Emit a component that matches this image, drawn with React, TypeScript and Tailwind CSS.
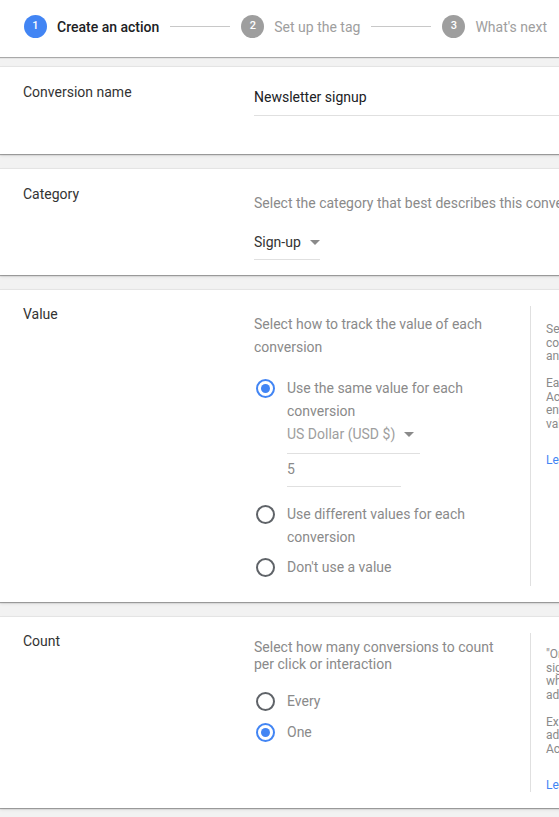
import React from "react"

type StepProps = {
  n: number
  label: string
  active?: boolean
}

const Step = ({ n, label, active }: StepProps) => (
  <div className="flex items-center gap-[10px] shrink-0">
    <div
      className={`flex h-[23px] w-[23px] items-center justify-center rounded-full text-[11px] font-medium text-white ${
        active ? "bg-[#4285f4]" : "bg-[#9e9e9e]"
      }`}
    >
      {n}
    </div>
    <span
      className={`text-[14px] leading-5 whitespace-nowrap ${
        active ? "font-medium text-[#202124]" : "text-[#9e9e9e]"
      }`}
    >
      {label}
    </span>
  </div>
)

const Connector = () => <div className="ml-[11px] mr-[11px] h-px w-[60px] shrink-0 bg-[#c8c8c8]" />

const Caret = () => (
  <svg width="10" height="5" viewBox="0 0 10 5" className="ml-[9px] shrink-0">
    <path d="M0 0h10L5 5z" fill="#8a8a8a" />
  </svg>
)

const Radio = ({ checked }: { checked?: boolean }) => (
  <div
    className={`mt-[2px] flex h-[19px] w-[19px] shrink-0 items-center justify-center rounded-full border-2 ${
      checked ? "border-[#4285f4]" : "border-[#5f6368]"
    }`}
  >
    {checked && <div className="h-[9px] w-[9px] rounded-full bg-[#4285f4]" />}
  </div>
)

type CardProps = {
  label: string
  labelTop: string
  className?: string
  children: React.ReactNode
}

const Card = ({ label, labelTop, className, children }: CardProps) => (
  <section
    className={`flex w-[900px] border-t border-[#e4e4e4] bg-white shadow-[0_1px_1px_rgba(0,0,0,0.32),0_2px_3px_rgba(0,0,0,0.08)] ${className ?? ""}`}
  >
    <div className={`w-[254px] shrink-0 pl-[23px] text-[14px] leading-5 text-[#333] ${labelTop}`}>
      {label}
    </div>
    <div className="flex-1">{children}</div>
  </section>
)

const HelpLines = ({ groups, link }: { groups: string[][]; link: string }) => (
  <div className="text-[12px] leading-[13.5px] text-[#8a8a8a] whitespace-nowrap">
    {groups.map((lines, i) => (
      <div key={i} className="mb-[13.5px]">
        {lines.map((l) => (
          <div key={l}>{l}</div>
        ))}
      </div>
    ))}
    <div className="mt-[23px] text-[#4285f4]">{link}</div>
  </div>
)

export default function App() {
  return (
    <div className="h-[817px] w-[559px] overflow-hidden bg-[#f2f2f2] font-['Roboto',sans-serif]">
      {/* stepper */}
      <header className="flex h-[57px] items-center bg-white pl-[24px] pb-[4px] shadow-[0_1px_1px_rgba(0,0,0,0.3)]">
        <Step n={1} label="Create an action" active />
        <Connector />
        <Step n={2} label="Set up the tag" />
        <Connector />
        <Step n={3} label="What's next" />
      </header>

      <div className="flex flex-col gap-[14px] pt-[9px]">
        <Card label="Conversion name" labelTop="pt-[15px]" className="h-[88px]">
          <div className="pt-[20px]">
            <div className="border-b border-[#e0e0e0] pb-[8px] text-[14px] leading-5 text-[#202124]">
              Newsletter signup
            </div>
          </div>
        </Card>

        <Card label="Category" labelTop="pt-[15px]" className="h-[107px]">
          <div className="pt-[24px] text-[14px] leading-5">
            <div className="whitespace-nowrap text-[#8a8a8a]">
              Select the category that best describes this conversion action
            </div>
            <div className="mt-[19px] flex w-[66px] items-center border-b border-[#e0e0e0] pb-[7px] text-[#333]">
              Sign-up
              <Caret />
            </div>
          </div>
        </Card>

        <Card label="Value" labelTop="pt-[14px]" className="h-[313px]">
          <div className="flex">
            <div className="w-[276px] shrink-0 pt-[23px] text-[14px] leading-[23px] text-[#8a8a8a]">
              <p className="w-[250px]">Select how to track the value of each conversion</p>
              <div className="mt-[18px] flex gap-[12px] pl-[2px]">
                <Radio checked />
                <div>
                  <div className="w-[200px]">Use the same value for each conversion</div>
                  <div className="flex w-[133px] items-center border-b border-[#e0e0e0] pb-[7px] text-[#9e9e9e]">
                    US Dollar (USD $)
                    <Caret />
                  </div>
                  <div className="mt-[4px] w-[114px] border-b border-[#e0e0e0] pb-[5px]">5</div>
                </div>
              </div>
              <div className="mt-[16px] flex gap-[12px] pl-[2px]">
                <Radio />
                <div className="w-[200px]">Use different values for each conversion</div>
              </div>
              <div className="mt-[7px] flex gap-[12px] pl-[2px]">
                <Radio />
                <div>Don't use a value</div>
              </div>
            </div>
            <div className="mt-[16px] h-[280px] border-l border-[#e0e0e0] pl-[15px] pt-[17px]">
              <HelpLines
                groups={[
                  ["Setting a value for each", "conversion lets you measure", "and optimize your results."],
                  ["Each time someone completes", "Actions you track, the value", "entered here is counted as the", "value of that conversion."],
                ]}
                link="Learn more"
              />
            </div>
          </div>
        </Card>

        <Card label="Count" labelTop="pt-[14px]" className="h-[192px]">
          <div className="flex">
            <div className="w-[276px] shrink-0 pt-[22px] text-[14px] leading-[17px] text-[#8a8a8a]">
              <p className="w-[260px]">Select how many conversions to count per click or interaction</p>
              <div className="mt-[17px] flex items-start gap-[12px] pl-[2px]">
                <Radio />
                <div className="pt-[3px]">Every</div>
              </div>
              <div className="mt-[10px] flex items-start gap-[12px] pl-[2px]">
                <Radio checked />
                <div className="pt-[3px]">One</div>
              </div>
            </div>
            <div className="mt-[16px] h-[159px] border-l border-[#e0e0e0] pl-[15px] pt-[15px]">
              <HelpLines
                groups={[
                  ["\"One\" is recommended for leads,", "sign-ups and other conversions", "where only the first interaction", "adds value for your business."],
                  ["Example: Someone clicks your", "ad and signs up twice. With", "Accounts, 1 conversion counts."],
                ]}
                link="Learn more"
              />
            </div>
          </div>
        </Card>
      </div>
    </div>
  )
}
